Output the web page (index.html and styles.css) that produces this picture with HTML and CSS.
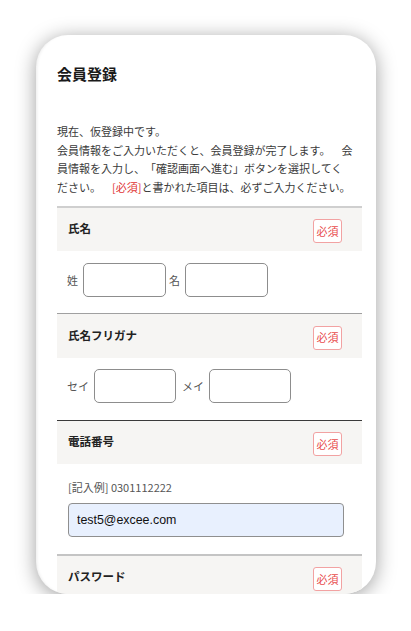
FILE: index.html
```html
<!DOCTYPE html>
<html lang="ja">
<head>
<meta charset="utf-8">
<title>会員登録</title>
<link rel="stylesheet" href="styles.css">
</head>
<body>
<div class="phone">
  <div class="screen">
    <h1 class="title">会員登録</h1>
    <p class="lead">現在、仮登録中です。<br>会員情報をご入力いただくと、会員登録が完了します。　会<br>員情報を入力し、「確認画面へ進む」ボタンを選択してく<br>ださい。　<span class="req-text">[必須]</span>と書かれた項目は、必ずご入力ください。</p>

    <section class="field field-a">
      <div class="field-head"><span class="field-name">氏名</span><span class="badge">必須</span></div>
      <div class="field-body row">
        <span class="lbl">姓</span><input class="box" type="text">
        <span class="lbl">名</span><input class="box" type="text">
      </div>
    </section>

    <section class="field field-b">
      <div class="field-head"><span class="field-name">氏名フリガナ</span><span class="badge">必須</span></div>
      <div class="field-body row">
        <span class="lbl">セイ</span><input class="box box-kana" type="text">
        <span class="lbl">メイ</span><input class="box box-kana" type="text">
      </div>
    </section>

    <section class="field field-c">
      <div class="field-head"><span class="field-name">電話番号</span><span class="badge">必須</span></div>
      <div class="field-body stack">
        <div class="example">[記入例] 0301112222</div>
        <input class="wide" type="text" value="test5@excee.com">
      </div>
    </section>

    <section class="field field-d">
      <div class="field-head"><span class="field-name">パスワード</span><span class="badge">必須</span></div>
      <div class="field-body stack">
        <input class="wide" type="password">
      </div>
    </section>
  </div>
</div>
</body>
</html>
```

FILE: styles.css
```css
* { box-sizing: border-box; }

html, body {
  margin: 0;
  padding: 0;
  background: #ffffff;
}

body {
  font-family: "Noto Sans CJK JP", "Noto Sans", sans-serif;
  color: #333;
}

.phone {
  margin: 35px 0 0 36px;
  width: 340px;
  height: 559px;
  border-radius: 32px;
  overflow: hidden;
  background: #fff;
  box-shadow: 0 3px 20px rgba(0, 0, 0, 0.38), inset 3px 0 3px -2px rgba(0, 0, 0, 0.08);
}

.screen {
  padding: 0 14px 0 21px;
}

.title {
  margin: 29px 0 0;
  font-size: 15px;
  line-height: 20px;
  font-weight: 700;
  color: #1a1a1a;
}

.lead {
  margin: 38px 0 0;
  font-size: 11px;
  line-height: 18.6px;
  color: #3a3a3a;
  white-space: nowrap;
  text-spacing-trim: space-all;
}

.req-text {
  color: #e03434;
}

.field {
  margin: 0;
}

.field-a { margin-top: 10px; border-top: 2px solid #cfcfcf; }
.field-b { border-top: 1px solid #a0a0a0; }
.field-c { border-top: 1px solid #3a3a3a; }
.field-d { border-top: 2px solid #c4c4c4; }

.field-head {
  display: flex;
  align-items: center;
  justify-content: space-between;
  height: 43px;
  padding: 0 20px 0 11px;
  background: #f6f5f3;
}

.field-b .field-head { height: 44px; }

.field-name {
  font-size: 11.5px;
  font-weight: 700;
  color: #222;
  margin-top: -3px;
}

.badge {
  display: flex;
  align-items: center;
  justify-content: center;
  width: 29px;
  height: 24px;
  margin-top: 3px;
  border: 1px solid #f2a2a2;
  border-radius: 3px;
  background: #fff;
  color: #e84c4c;
  font-size: 11px;
  line-height: 1;
}

.field-body {
  padding: 12px 18px 16px 10px;
}

.field-b .field-body { padding-top: 11px; padding-bottom: 17px; }

.row {
  display: flex;
  align-items: center;
  gap: 3px;
}

.lbl {
  font-size: 11px;
  color: #555;
  line-height: 16px;
}

.box {
  width: 83px;
  height: 34px;
  margin: 0 0 0 2px;
  border: 1px solid #8d8d8d;
  border-radius: 5px;
  background: #fff;
}

.box-kana {
  width: 82px;
  margin-right: 3px;
}

.stack {
  display: flex;
  flex-direction: column;
  padding: 15px 18px 17px 11px;
}

.example {
  font-size: 11px;
  line-height: 16px;
  color: #555;
  margin-bottom: 8px;
}

.wide {
  width: 276px;
  height: 34px;
  padding: 0 8px;
  border: 1px solid #8f8f8f;
  border-radius: 4px;
  background: #e8f0fe;
  font-family: "Liberation Sans", Arial, sans-serif;
  font-size: 12.4px;
  color: #111;
}
```
